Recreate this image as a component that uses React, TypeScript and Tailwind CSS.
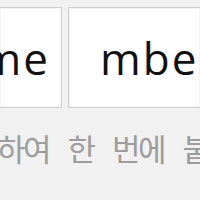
export default function App() {
  return (
    <div className="w-[200px] h-[200px] overflow-hidden bg-[#f1f1f1] pt-[7px]" style={{ fontFamily: '"Open Sans", "Noto Sans CJK KR", sans-serif' }}>
      <div className="flex gap-[6px] h-[101px]">
        <div className="w-[62px] shrink-0 bg-white border border-[#cfcfcf] border-l-0 shadow-[inset_0_0_0_1px_#f4f4f4] flex items-center justify-end pr-[11px] overflow-hidden">
          <span className="text-[44px] leading-none tracking-[2px] text-[#111] whitespace-nowrap">me</span>
        </div>
        <div className="flex-1 min-w-0 bg-white border border-[#cfcfcf] border-r-0 shadow-[inset_0_0_0_1px_#f4f4f4] flex items-center pl-[31px] overflow-hidden">
          <span className="text-[44px] leading-none tracking-[2px] text-[#111] whitespace-nowrap">mbe</span>
        </div>
      </div>
      <div className="mt-[24px] ml-[-3px] whitespace-nowrap text-[31px] leading-none text-[#9c9c9c] tracking-[-2.5px] [word-spacing:14px]" style={{ fontFamily: '"Noto Sans CJK KR", sans-serif' }}>
        하여 한 번에 붙여넣기
      </div>
    </div>
  );
}
